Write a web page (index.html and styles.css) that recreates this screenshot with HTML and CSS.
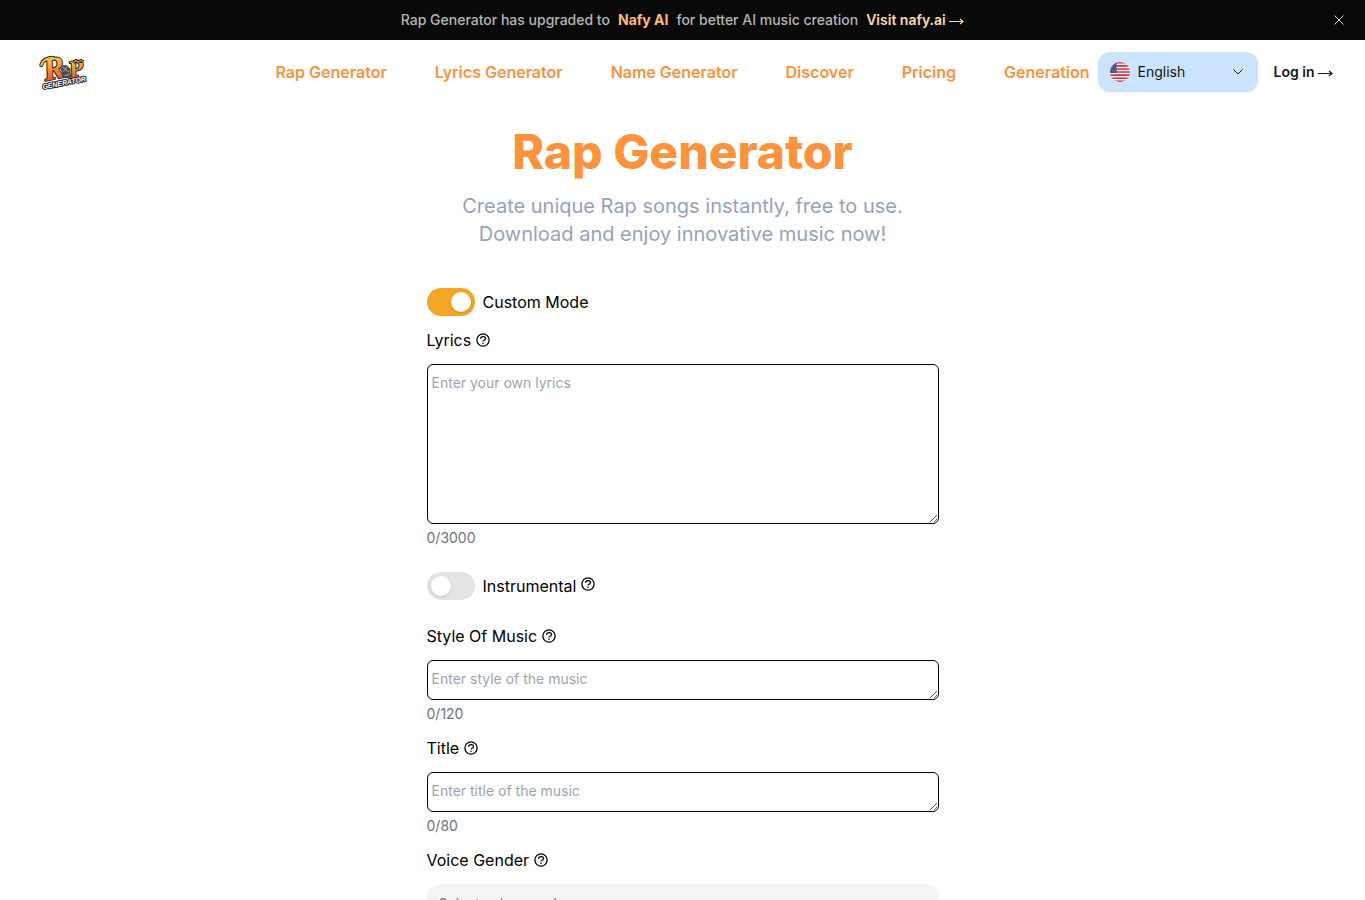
FILE: index.html
```html
<!DOCTYPE html>
<html lang="en">
<head>
  <meta charset="UTF-8" />
  <meta name="viewport" content="width=device-width, initial-scale=1" />
  <title>Rap Generator</title>
  <link rel="stylesheet" href="styles.css">
</head>
<body>
  <!-- shared icons -->
  <svg class="sprite" aria-hidden="true">
    <symbol id="help" viewBox="0 0 24 24">
      <circle cx="12" cy="12" r="10.5" fill="none" stroke="currentColor" stroke-width="2.2" />
      <path d="M7.800 9.800c0-5 8.600-4.600 8.600-.4 0 3-4.400 2.800-4.400 5.200" fill="none" stroke="currentColor" stroke-width="2" />
      <circle cx="12" cy="17.500" r="1.300" fill="currentColor" />
    </symbol>
    <symbol id="arrow" viewBox="0 0 15 8">
      <path d="M0 4.500h14M11 2l3 2.500-3 2.500" fill="none" stroke="currentColor" stroke-width="1.200" />
    </symbol>
  </svg>

  <div class="banner">
    <p>
      <span>Rap Generator has upgraded to</span>
      <strong>Nafy AI</strong>
      <span>for better AI music creation</span>
      <a href="#">Visit nafy.ai <svg class="arrow"><use href="#arrow" /></svg></a>
    </p>
    <button type="button" class="banner-close" aria-label="Close">
      <svg viewBox="0 0 10 10" width="10" height="10"><path d="M0.500 0.500l9 9M9.500 0.500l-9 9" stroke="currentColor" /></svg>
    </button>
  </div>

  <header class="header">
    <div class="header-left">
      <a href="#" class="logo" aria-label="Rap Generator">
        <svg viewBox="0 0 48 36" width="48" height="36">
          <defs>
            <linearGradient id="fire" x1="0" y1="0" x2="0" y2="1">
              <stop offset="0.300" stop-color="#f0c03c" />
              <stop offset="0.800" stop-color="#e8602b" />
            </linearGradient>
          </defs>
          <g transform="rotate(-11 24 18)">
            <path d="M3 7c2-5 8-6 13-5" fill="none" stroke="#2a211e" stroke-width="4" stroke-linecap="round" />
            <text x="4" y="23" class="logo-big">R</text>
            <text x="29" y="25" class="logo-mid">P</text>
            <path d="M3 7c2-5 8-6 13-5" fill="none" stroke="#f0c03c" stroke-width="2" stroke-linecap="round" />
            <path d="M21 14l3-3 4 1 3 4-1 5 1 3-5 1-5-2 1-5z" fill="#4a4847" />
            <path d="M23 13l3 2 2-1M23 17l3-1 3 3M24 21l2 1 3-1" fill="none" stroke="#aaa39d" />
            <path d="M35 11l3-2 2 2 3-1 2 2" fill="none" stroke="#2a211e" stroke-width="3" />
            <path d="M35 11l3-2 2 2 3-1 2 2" fill="none" stroke="#e8b23b" />
            <text x="0" y="31" class="logo-small">GENERATOR</text>
          </g>
        </svg>
      </a>
    </div>
    <nav class="nav">
      <a href="#">Rap Generator</a>
      <a href="#">Lyrics Generator</a>
      <a href="#">Name Generator</a>
      <a href="#">Discover</a>
      <a href="#">Pricing</a>
      <a href="#">Generation</a>
    </nav>
    <div class="header-right">
      <button type="button" class="language" aria-haspopup="listbox">
        <svg class="flag" viewBox="0 0 20 20" width="20" height="20">
          <clipPath id="round"><circle cx="10" cy="10" r="10" /></clipPath>
          <g clip-path="url(#round)">
            <path d="M0 0h20v20H0z" fill="#f3eff0" />
            <path d="M0 .8h20M0 3.900h20M0 7h20M0 10h20M0 13.100h20M0 16.200h20M0 19.300h20" stroke="#c8354b" stroke-width="1.600" />
            <path d="M0 0h6.500v10.800H0z" fill="#474a7d" />
            <path d="M1 3h5M0 5h6M1 7h5M0 9h6" stroke="#a9aac4" stroke-width=".7" stroke-dasharray=".8 1.200" />
          </g>
        </svg>
        <span>English</span>
        <svg class="chevron" viewBox="0 0 10 6" width="10" height="6"><path d="M.5.5L5 5 9.500.5" fill="none" stroke="currentColor" /></svg>
      </button>
      <a href="#" class="login">Log in <svg class="arrow"><use href="#arrow" /></svg></a>
    </div>
  </header>

  <main>
    <h1>Rap Generator</h1>
    <p class="intro">Create unique Rap songs instantly, free to use.<br>Download and enjoy innovative music now!</p>

    <form class="form">
      <div class="switch-row">
        <input type="checkbox" class="switch" id="customMode" checked />
        <label for="customMode">Custom Mode</label>
      </div>

      <div class="field">
        <label for="lyrics">Lyrics <svg class="help"><use href="#help" /></svg></label>
        <textarea id="lyrics" class="tall" maxlength="3000" placeholder="Enter your own lyrics"></textarea>
        <span class="count">0/3000</span>
      </div>

      <div class="switch-row spaced">
        <input type="checkbox" class="switch" id="instrumental" />
        <label for="instrumental">Instrumental</label>
        <svg class="help raised"><use href="#help" /></svg>
      </div>

      <div class="field">
        <label for="style">Style Of Music <svg class="help"><use href="#help" /></svg></label>
        <textarea id="style" maxlength="120" placeholder="Enter style of the music"></textarea>
        <span class="count">0/120</span>
      </div>

      <div class="field">
        <label for="title">Title <svg class="help"><use href="#help" /></svg></label>
        <textarea id="title" maxlength="80" placeholder="Enter title of the music"></textarea>
        <span class="count">0/80</span>
      </div>

      <div class="field">
        <label for="gender">Voice Gender <svg class="help"><use href="#help" /></svg></label>
        <select id="gender">
          <option value="">Select voice gender</option>
          <option>Male</option>
          <option>Female</option>
        </select>
      </div>
    </form>
  </main>
</body>
</html>
```
FILE: styles.css
```css
* {
  box-sizing: border-box;
}
body {
  margin: 0;
  font-family: Inter, sans-serif;
  font-size: 16px;
  line-height: 24px;
  color: #11181c;
  background: #fff;
}
a {
  text-decoration: none;
}
button {
  font: inherit;
  border: none;
  cursor: pointer;
}
.sprite {
  position: absolute;
  width: 0;
  height: 0;
}
.arrow {
  width: 15px;
  height: 8px;
}

/* top banner */
.banner {
  position: relative;
  height: 40px;
  background: #0a0a0a;
  color: #b5b5b5;
  font-size: 14px;
  line-height: 20px;
  font-weight: 500;
}
.banner p {
  display: flex;
  justify-content: center;
  gap: 8px;
  margin: 0;
  padding: 10px 0;
}
.banner strong {
  color: #fdba74;
  font-weight: 700;
}
.banner a {
  color: #fed7aa;
  font-weight: 600;
}
.banner-close {
  position: absolute;
  top: 10px;
  right: 16px;
  display: flex;
  align-items: center;
  justify-content: center;
  width: 20px;
  height: 20px;
  padding: 0;
  background: none;
  color: #d4d4d4;
}

/* header */
.header {
  display: flex;
  align-items: center;
  height: 64px;
  padding: 0 32px;
}
.header-left,
.header-right {
  display: flex;
  flex: 1;
  align-items: center;
}
.header-right {
  justify-content: flex-end;
  gap: 16px;
}
.logo {
  display: flex;
  margin-left: 8px;
}
.logo svg {
  overflow: visible;
}
.logo text {
  font-family: "Liberation Serif", serif;
  font-weight: 700;
  font-style: italic;
  fill: url(#fire);
  stroke: #2a211e;
  stroke-width: 2px;
  stroke-linejoin: round;
  paint-order: stroke;
}
.logo-big {
  font-size: 32px;
}
.logo-mid {
  font-size: 24px;
}
.logo .logo-small {
  font-family: "Liberation Sans", sans-serif;
  font-size: 7px;
  fill: #fff;
}
.nav {
  display: flex;
  gap: 48px;
}
.nav a {
  color: #fb923c;
  font-weight: 600;
  white-space: nowrap;
}
.language {
  display: flex;
  align-items: center;
  gap: 8px;
  width: 160px;
  height: 40px;
  padding: 0 15px 0 12px;
  border-radius: 12px;
  background: #cce3fd;
  box-shadow: 0 1px 2px rgba(0,0,0,0.05);
  color: #11181c;
  font-size: 14px;
}
.chevron {
  margin-left: auto;
}
.login {
  color: #111827;
  font-size: 14px;
  font-weight: 600;
  white-space: nowrap;
}

/* page title */
main {
  padding: 24px 24px 64px;
}
h1 {
  margin: 0;
  color: #fb923c;
  font-size: 48px;
  line-height: 48px;
  font-weight: 800;
  text-align: center;
}
.intro {
  margin: 16px 0 40px;
  color: #94a3b8;
  font-size: 20px;
  line-height: 28px;
  text-align: center;
}

/* generator form */
.form {
  display: flex;
  flex-direction: column;
  gap: 12px;
  max-width: 512px;
  margin: 0 auto;
  color: #000;
}
.switch-row {
  display: flex;
  align-items: center;
  gap: 8px;
}
.switch-row.spaced {
  margin: 12px 0;
}
.switch {
  appearance: none;
  display: flex;
  align-items: center;
  width: 48px;
  height: 28px;
  margin: 0;
  padding: 0 4px;
  border-radius: 14px;
  background: #e4e4e7;
  cursor: pointer;
}
.switch::before {
  content: "";
  width: 20px;
  height: 20px;
  border-radius: 50%;
  background: #fff;
  box-shadow: 0 1px 3px rgba(0,0,0,0.15);
}
.switch:checked {
  justify-content: flex-end;
  background: #f5a524;
}
.field {
  display: flex;
  flex-direction: column;
}
.field label {
  display: flex;
  align-items: center;
  gap: 5px;
  margin-bottom: 12px;
}
.help {
  width: 14px;
  height: 14px;
}
.raised {
  margin: 0 0 4px -3px;
}
textarea {
  height: 40px;
  padding: 8px 4px;
  border: 1px solid #000;
  border-radius: 6px;
  background: #fff;
  font-family: inherit;
  font-size: 14px;
  line-height: 20px;
}
textarea.tall {
  height: 160px;
}
textarea::placeholder {
  color: #9ca3af;
}
.count {
  margin-top: 4px;
  color: #6b7280;
  font-size: 14px;
  line-height: 20px;
}
select {
  appearance: none;
  height: 40px;
  padding: 0 12px 2px;
  border: none;
  border-radius: 12px;
  background: #f4f4f5;
  color: #71717a;
  font-family: inherit;
  font-size: 14px;
}
```
